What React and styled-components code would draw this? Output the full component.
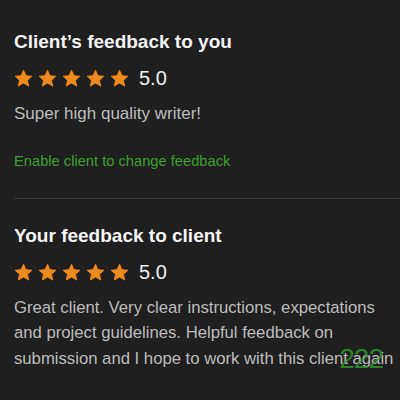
import styled, { createGlobalStyle } from "styled-components";

const GlobalStyle = createGlobalStyle`
  html, body {
    margin: 0;
    padding: 0;
    background: #1f1f1f;
  }
  body {
    font-family: "Liberation Sans", Arial, sans-serif;
    -webkit-font-smoothing: antialiased;
  }
`;

const Page = styled.div`
  position: relative;
  width: 400px;
  height: 400px;
  overflow: hidden;
  background: #1f1f1f;
  padding-left: 14px;
  box-sizing: border-box;
`;

const Section = styled.section`
  display: flex;
  flex-direction: column;
  padding-top: ${(p) => p.$top}px;
  padding-bottom: ${(p) => p.$bottom}px;
  padding-right: 4px;
`;

const Title = styled.h2`
  margin: 0;
  font-size: 19px;
  font-weight: 700;
  color: #f4f4f4;
  line-height: 24px;
`;

const RatingRow = styled.div`
  display: flex;
  align-items: center;
  gap: 6px;
  margin-top: 13px;
`;

const Stars = styled.div`
  display: flex;
  gap: 5px;
`;

const Score = styled.span`
  margin-left: 4px;
  font-size: 20px;
  color: #f1f1f1;
`;

const Comment = styled.p`
  margin: 11px 0 0;
  font-size: ${(p) => p.$size}px;
  line-height: 25.5px;
  color: #bdbdbd;
`;

const ActionLink = styled.a`
  margin-top: 26px;
  font-size: 14.7px;
  color: #3da12f;
  text-decoration: none;
`;

const Divider = styled.hr`
  margin: 0;
  border: none;
  height: 1px;
  background: #3a3a3a;
`;

const Counter = styled.span`
  position: absolute;
  right: 17px;
  bottom: 25px;
  font-size: 28px;
  color: rgba(52, 160, 52, 0.75);
  letter-spacing: -1px;
`;

const Star = () => (
  <svg width="19" height="19" viewBox="0 0 24 24">
    <path
      d="M12 1.6l3.1 6.9 7.4.7-5.6 5 1.7 7.3L12 17.7l-6.6 3.8 1.7-7.3-5.6-5 7.4-.7z"
      fill="#f08a1c"
      stroke="#f08a1c"
      strokeWidth="1.2"
      strokeLinejoin="round"
    />
  </svg>
);

const Rating = ({ value }) => (
  <RatingRow>
    <Stars>
      {[0, 1, 2, 3, 4].map((i) => (
        <Star key={i} />
      ))}
    </Stars>
    <Score>{value.toFixed(1)}</Score>
  </RatingRow>
);

const App = () => (
  <Page>
    <GlobalStyle />
    <Section $top={30} $bottom={29}>
      <Title>Client’s feedback to you</Title>
      <Rating value={5} />
      <Comment $size={17}>Super high quality writer!</Comment>
      <ActionLink href="#">Enable client to change feedback</ActionLink>
    </Section>
    <Divider />
    <Section $top={25} $bottom={0}>
      <Title>Your feedback to client</Title>
      <Rating value={5} />
      <Comment $size={16.7}>
        Great client. Very clear instructions, expectations and project
        guidelines. Helpful feedback on submission and I hope to work with
        this client again
      </Comment>
    </Section>
    <Counter>222</Counter>
  </Page>
);

export default App;
